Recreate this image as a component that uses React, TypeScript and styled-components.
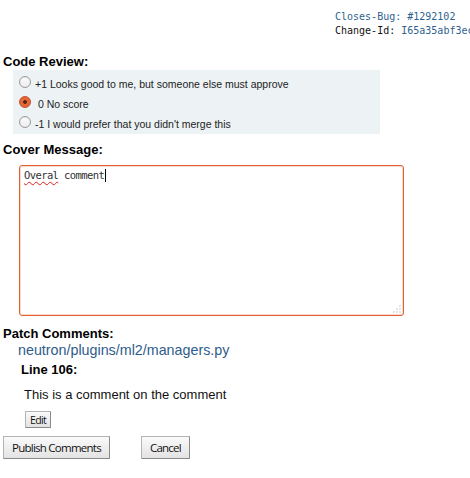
import React from "react";
import styled, { createGlobalStyle } from "styled-components";

const Global = createGlobalStyle`
  html, body { margin: 0; padding: 0; background: #ffffff; }
  body { font-family: "Liberation Sans", Arial, sans-serif; color: #000; }
`;

const Page = styled.div`
  display: flex;
  flex-direction: column;
  align-items: flex-start;
  padding: 0 0 0 3px;
  width: 467px;
  overflow: hidden;
`;

const Meta = styled.pre`
  margin: 0;
  padding: 10px 0 0 332px;
  font-family: "DejaVu Sans Mono", monospace;
  font-size: 10px;
  line-height: 14px;
  white-space: pre;
  color: #111;
  align-self: stretch;
  overflow: hidden;
`;

const MetaValue = styled.span`
  color: #2f5f8f;
`;

const Heading = styled.div<{ $top: number; $left?: number }>`
  margin: ${(p) => p.$top}px 0 0 ${(p) => p.$left ?? 0}px;
  font-size: 13px;
  font-weight: bold;
  line-height: 15px;
  color: #000;
`;

const Panel = styled.div`
  margin: 1px 0 0 10px;
  width: 367px;
  padding: 4px 0 0;
  background: #edf2f5;
  display: flex;
  flex-direction: column;
`;

const Row = styled.label`
  display: flex;
  align-items: center;
  height: 20px;
`;

const Radio = styled.span<{ $checked?: boolean }>`
  box-sizing: border-box;
  width: 12px;
  height: 12px;
  margin: 0 4px 4px 6px;
  border-radius: 50%;
  border: 1px solid ${(p) => (p.$checked ? "#c4512a" : "#9a9a9a")};
  background: ${(p) =>
    p.$checked
      ? "radial-gradient(circle at 50% 50%, #5a2a1a 0 1.6px, #e8683a 2.2px, #e06035 100%)"
      : "linear-gradient(#fdfdfd, #ececec)"};
  box-shadow: ${(p) => (p.$checked ? "none" : "inset 0 1px 1px rgba(0,0,0,0.08)")};
  flex: none;
`;

const RowText = styled.span`
  font-size: 10.5px;
  line-height: 20px;
  color: #222;
  white-space: pre;
`;

const BoxWrap = styled.div`
  position: relative;
  margin: 8px 0 0 16px;
`;

const TextBox = styled.div`
  box-sizing: border-box;
  width: 385px;
  height: 151px;
  border: 1px solid #e1622f;
  border-radius: 3px;
  box-shadow: inset 0 0 0 1px rgba(236, 130, 90, 0.3);
  padding: 2px 4px;
  font-family: "DejaVu Sans Mono", monospace;
  font-size: 10.5px;
  letter-spacing: -0.6px;
  line-height: 14px;
  color: #333;
  background: #fff;
  white-space: pre;
`;

const Misspelled = styled.span`
  text-decoration: underline wavy #e0201a;
  text-decoration-thickness: 1px;
  text-underline-offset: 2px;
`;

const Caret = styled.span`
  display: inline-block;
  width: 1px;
  height: 13px;
  background: #000;
  vertical-align: -3px;
  margin-left: 1px;
`;

const Grip = styled.svg`
  position: absolute;
  right: 3px;
  bottom: 3px;
`;

const FileLink = styled.a`
  margin: 1px 0 0 15px;
  font-size: 14.3px;
  line-height: 17px;
  color: #2e5c8a;
  text-decoration: none;
`;

const Comment = styled.div`
  margin: 10px 0 0 21px;
  font-size: 13px;
  line-height: 15px;
  color: #111;
`;

const Button = styled.button<{ $small?: boolean }>`
  box-sizing: border-box;
  height: ${(p) => (p.$small ? 17 : 23)}px;
  padding: 0 ${(p) => (p.$small ? 4 : 8)}px;
  font-family: "Open Sans", sans-serif;
  font-size: ${(p) => (p.$small ? 10.5 : 11.5)}px;
  letter-spacing: ${(p) => (p.$small ? -0.6 : -0.75)}px;
  color: #111;
  background: linear-gradient(#fafafa, #e3e3e3);
  border: 1px solid #b4b4b4;
  border-right-color: #8a8a8a;
  border-bottom-color: #8a8a8a;
  border-radius: 1px;
  cursor: pointer;
`;

const EditRow = styled.div`
  margin: 9px 0 0 22px;
  display: flex;
`;

const Actions = styled.div`
  margin: 8px 0 0 0;
  display: flex;
  gap: 31px;
`;

export default function App() {
  return (
    <>
      <Global />
      <Page>
        <Meta>
          <MetaValue>Closes-Bug: #1292102</MetaValue>
          {"\n"}Change-Id: <MetaValue>I65a35abf3ec0a2b9e2c1d7f4</MetaValue>
        </Meta>

        <Heading $top={16}>Code Review:</Heading>
        <Panel>
          <Row>
            <Radio />
            <RowText>+1 Looks good to me, but someone else must approve</RowText>
          </Row>
          <Row>
            <Radio $checked />
            <RowText> 0 No score</RowText>
          </Row>
          <Row>
            <Radio />
            <RowText>-1 I would prefer that you didn't merge this</RowText>
          </Row>
        </Panel>

        <Heading $top={8}>Cover Message:</Heading>
        <BoxWrap>
          <TextBox role="textbox">
            <Misspelled>Overal</Misspelled> comment<Caret />
          </TextBox>
          <Grip width="8" height="8" viewBox="0 0 8 8">
            {[
              [6.5, 0.5],
              [6.5, 3.5],
              [3.5, 3.5],
              [6.5, 6.5],
              [3.5, 6.5],
              [0.5, 6.5],
            ].map(([x, y], i) => (
              <rect key={i} x={x} y={y} width="1" height="1" fill="#9a9a9a" />
            ))}
          </Grip>
        </BoxWrap>

        <Heading $top={10}>Patch Comments:</Heading>
        <FileLink href="#">neutron/plugins/ml2/managers.py</FileLink>
        <Heading $top={3} $left={18}>Line 106:</Heading>
        <Comment>This is a comment on the comment</Comment>
        <EditRow>
          <Button $small>Edit</Button>
        </EditRow>
        <Actions>
          <Button>Publish Comments</Button>
          <Button>Cancel</Button>
        </Actions>
      </Page>
    </>
  );
}
